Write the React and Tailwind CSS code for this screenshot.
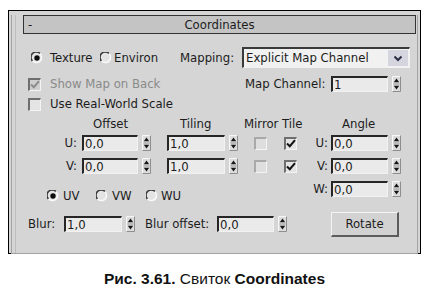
function Radio({ checked }) {
  return (
    <svg width="12" height="12" viewBox="0 0 12 12" className="shrink-0">
      <circle cx="6" cy="6" r="5.5" fill="#e4e4e4" />
      <path d="M1.5 9 A5 5 0 0 1 9 1.5" fill="none" stroke="#3c3c3c" strokeWidth="1.6" />
      <path d="M9 1.5 A5 5 0 0 1 1.5 9" fill="none" stroke="#fafafa" strokeWidth="1.3" />
      {checked && <circle cx="6" cy="6" r="2.7" fill="#0d0d0d" />}
    </svg>
  );
}

function Check({ checked, disabled, light }) {
  const bg = disabled ? "bg-[#cfcfcf]" : light ? "bg-[#dedede]" : "bg-[#e4e4e4]";
  const edge = light ? "border-[#a9a9a9]" : "border-[#6e6e6e]";
  return (
    <div
      className={`flex h-[13px] w-[13px] shrink-0 items-center justify-center border-l-2 border-t-2 ${edge} border-b border-r border-b-[#f4f4f4] border-r-[#f4f4f4] ${bg}`}
    >
      {checked && (
        <svg width="10" height="9" viewBox="0 0 10 9">
          <path
            d="M1 4.5 L3.8 7.2 L9 1.2"
            fill="none"
            stroke={disabled ? "#8c8c8c" : "#111"}
            strokeWidth="2"
          />
        </svg>
      )}
    </div>
  );
}

function Spinner() {
  return (
    <svg width="9" height="16" viewBox="0 0 9 16" className="shrink-0">
      <rect x="0" y="0" width="9" height="16" fill="#dcdcdc" />
      <path d="M0.5 15.5 V0.5 H8.5" fill="none" stroke="#f7f7f7" strokeWidth="1" />
      <path d="M8.5 0.5 V15.5 H0.5" fill="none" stroke="#8e8e8e" strokeWidth="1" />
      <path d="M1.8 6.3 L4.5 2.6 L7.2 6.3 Z" fill="#151515" />
      <path d="M1.5 8 H7.5" stroke="#9a9a9a" strokeWidth="1" />
      <path d="M1.8 9.7 L4.5 13.4 L7.2 9.7 Z" fill="#151515" />
    </svg>
  );
}

function Box({ value, w }) {
  return (
    <div
      className={`flex h-[16px] ${w} shrink-0 items-center border-l-2 border-t-2 border-[#262626] border-b border-r border-b-[#f2f2f2] border-r-[#f2f2f2] bg-[#eaeaea] pl-[1px] leading-none`}
    >
      {value}
    </div>
  );
}

export default function App() {
  return (
    <div className="h-[291px] w-[429px] overflow-hidden bg-white text-[13px] text-[#1c1c1c]">
      <div className="ml-[8px] mt-[10px] h-[244px] w-[413px] border border-black bg-[#d5d5d5] px-[2px] pb-[3px] font-['DejaVu_Sans_Condensed','DejaVu_Sans',sans-serif]">
        <div className="h-full border-x border-b border-[#a3a3a3] pl-[3px]">
          <div className="h-full border-l border-[#bdbdbd]">
            {/* rollout title */}
            <div className="ml-[7px] mt-[4px] grid h-[19px] w-[393px] grid-cols-[1fr_auto_1fr] items-center border border-[#333] bg-[#c4c4c4] leading-none">
              <span className="pl-[4px]">-</span>
              <span>Coordinates</span>
              <span />
            </div>

            {/* texture / environ / mapping */}
            <div className="mt-[13px] flex h-[21px] items-center">
              <div className="ml-[15px]">
                <Radio checked />
              </div>
              <span className="ml-[7px] w-[50px] shrink-0">Texture</span>
              <Radio />
              <span className="ml-[2px] w-[66px] shrink-0">Environ</span>
              <span className="w-[62px] shrink-0">Mapping:</span>
              <div className="flex h-[21px] w-[168px] shrink-0 items-center justify-between border-l-2 border-t-2 border-[#3a3a3a] border-b border-r border-b-[#f2f2f2] border-r-[#f2f2f2] bg-[#f1f1f1] pl-[2px] pr-[1px]">
                <span>Explicit Map Channel</span>
                <div className="flex h-[16px] w-[20px] items-center justify-center bg-[#d5d5e0]">
                  <svg width="10" height="7" viewBox="0 0 10 7">
                    <path d="M1.5 1.5 L5 5 L8.5 1.5" fill="none" stroke="#2b2f45" strokeWidth="2" />
                  </svg>
                </div>
              </div>
            </div>

            {/* show map on back / map channel */}
            <div className="mt-[7px] flex h-[18px] items-center">
              <div className="ml-[12px]">
                <Check checked disabled />
              </div>
              <span className="ml-[9px] w-[195px] shrink-0 text-[#8a8a8a]">Show Map on Back</span>
              <span className="w-[86px] shrink-0">Map Channel:</span>
              <Box value="1" w="w-[57px]" />
              <div className="ml-[4px]">
                <Spinner />
              </div>
            </div>

            {/* real world */}
            <div className="mt-[3px] flex h-[16px] items-center">
              <div className="ml-[12px]">
                <Check />
              </div>
              <span className="ml-[9px]">Use Real-World Scale</span>
            </div>

            <div className="mt-[5px] flex">
              {/* offset / tiling / mirror */}
              <div className="w-[297px] shrink-0">
                <div className="flex h-[14px] items-center">
                  <span className="ml-[77px] w-[87px] shrink-0">Offset</span>
                  <span className="w-[64px] shrink-0">Tiling</span>
                  <span>Mirror Tile</span>
                </div>
                {["U:", "V:"].map((l, i) => (
                  <div key={l} className={`flex h-[16px] items-center ${i === 0 ? "mt-[4px]" : "mt-[7px]"}`}>
                    <span className="w-[62px] shrink-0 pr-[1px] text-right">{l}</span>
                    <div className="ml-[4px]">
                      <Box value="0,0" w="w-[56px]" />
                    </div>
                    <div className="ml-[4px]">
                      <Spinner />
                    </div>
                    <div className="ml-[16px]">
                      <Box value="1,0" w="w-[58px]" />
                    </div>
                    <div className="ml-[4px]">
                      <Spinner />
                    </div>
                    <div className="ml-[16px]">
                      <Check light />
                    </div>
                    <div className="ml-[17px]">
                      <Check checked />
                    </div>
                  </div>
                ))}
                <div className="mt-[15px] flex h-[14px] items-center">
                  <div className="ml-[31px]">
                    <Radio checked />
                  </div>
                  <span className="ml-[4px] w-[33px] shrink-0">UV</span>
                  <Radio />
                  <span className="ml-[4px] w-[34px] shrink-0">VW</span>
                  <Radio />
                  <span className="ml-[3px]">WU</span>
                </div>
                <div className="mt-[13px] flex h-[16px] items-center">
                  <span className="ml-[12px] w-[36px] shrink-0">Blur:</span>
                  <Box value="1,0" w="w-[58px]" />
                  <div className="ml-[4px]">
                    <Spinner />
                  </div>
                  <span className="ml-[10px] w-[72px] shrink-0">Blur offset:</span>
                  <Box value="0,0" w="w-[57px]" />
                  <div className="ml-[4px]">
                    <Spinner />
                  </div>
                </div>
              </div>

              {/* angle */}
              <div>
                <div className="flex h-[14px] items-center">
                  <span className="ml-[29px]">Angle</span>
                </div>
                {["U:", "V:", "W:"].map((l, i) => (
                  <div key={l} className={`flex h-[16px] items-center ${i === 0 ? "mt-[4px]" : "mt-[7px]"}`}>
                    <span className="w-[18px] shrink-0 pr-[3px] text-right">{l}</span>
                    <Box value="0,0" w="w-[57px]" />
                    <div className="ml-[4px]">
                      <Spinner />
                    </div>
                  </div>
                ))}
                <div className="ml-[18px] mt-[15px] flex h-[25px] w-[68px] items-center justify-center border-l border-t border-[#f4f4f4] border-b-2 border-r-2 border-b-[#5c5c5c] border-r-[#5c5c5c] bg-[#d2d2d2]">
                  Rotate
                </div>
              </div>
            </div>
          </div>
        </div>
      </div>

      <p className="mt-[16px] text-center font-['Liberation_Sans',Arial,sans-serif] text-[15.5px] leading-[18px] text-[#111]">
        <span className="font-bold">Рис. 3.61.</span> Свиток <span className="font-bold">Coordinates</span>
      </p>
    </div>
  );
}
